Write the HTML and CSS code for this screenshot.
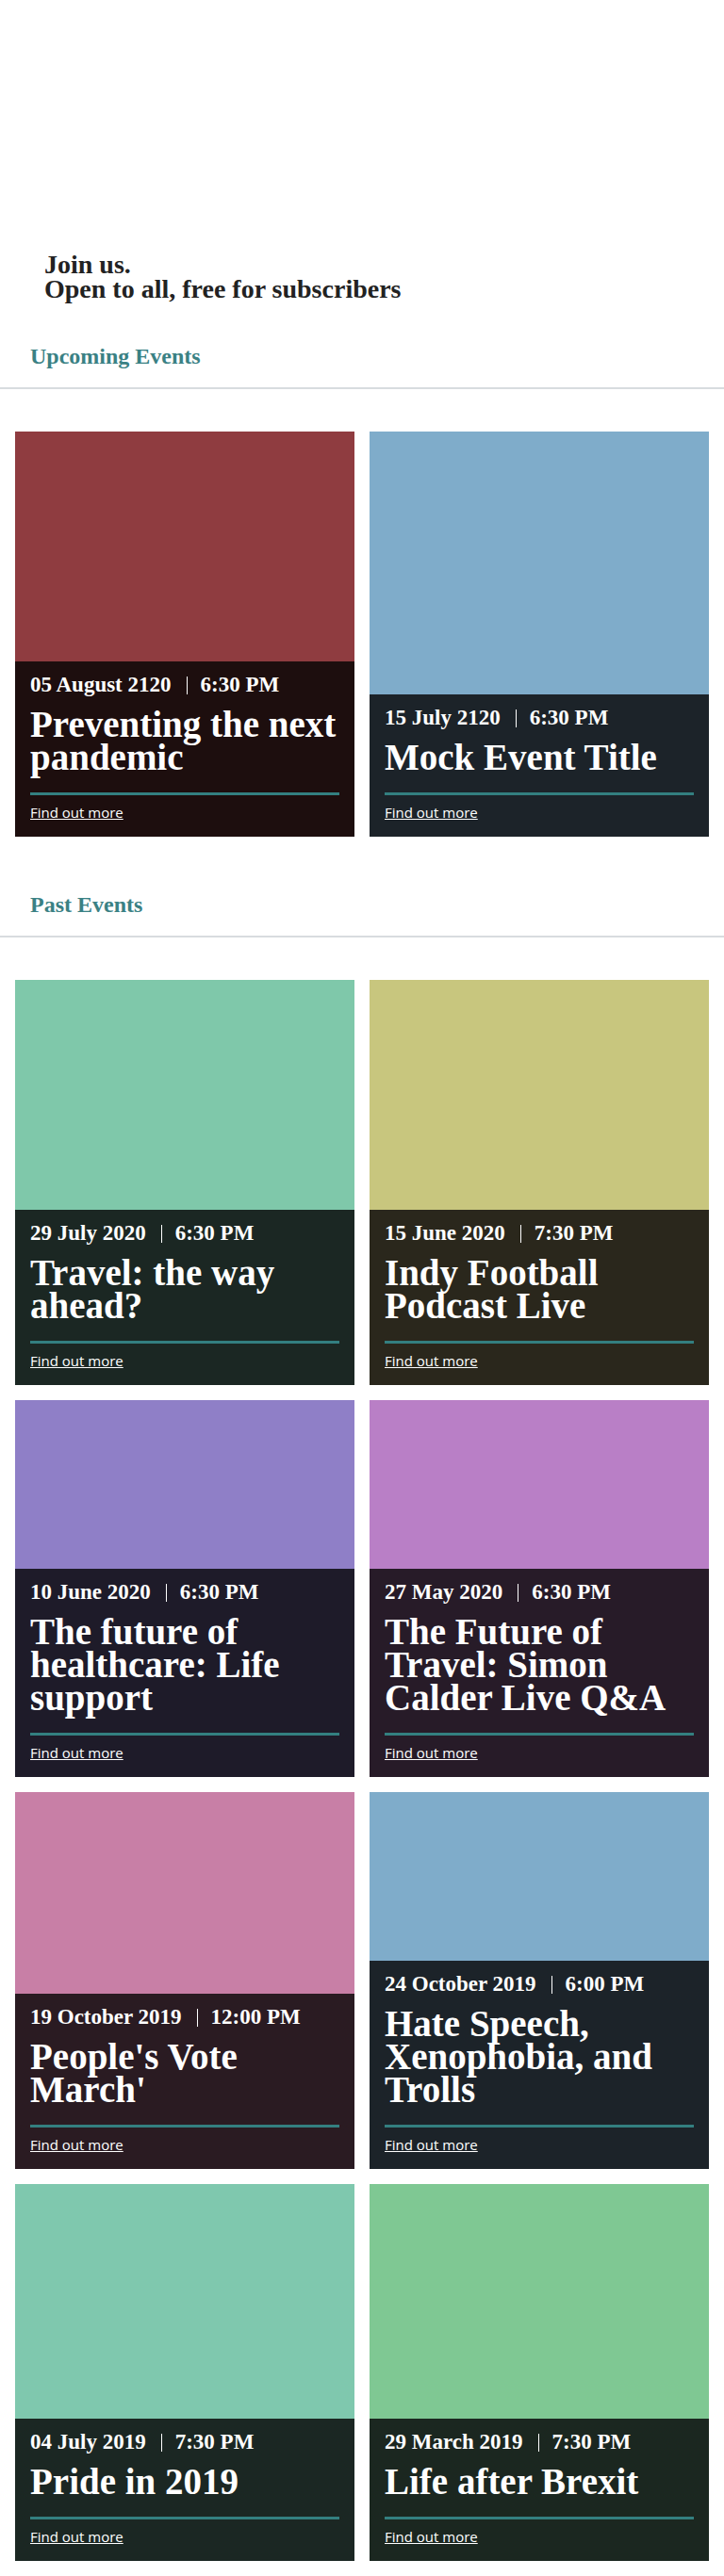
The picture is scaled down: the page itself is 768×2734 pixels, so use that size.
FILE: index.html
```html
<!DOCTYPE html>
<html lang="en">
<head>
<meta charset="utf-8">
<title>Events</title>
<link rel="stylesheet" href="styles.css">
</head>
<body>
<main class="page">
  <header class="intro">
    <h1 class="intro-title">Join us.<br>Open to all, free for subscribers</h1>
  </header>

  <section class="events">
    <h2 class="events-heading">Upcoming Events</h2>
    <div class="grid">
      <article class="card">
        <div class="thumb thumb--tall thumb-red"></div>
        <div class="body body-red">
          <p class="meta"><span>05 August 2120</span><span class="sep"></span><span>6:30 PM</span></p>
          <h3 class="title">Preventing the next pandemic</h3>
          <hr class="rule">
          <a class="more" href="#">Find out more</a>
        </div>
      </article>
      <article class="card">
        <div class="thumb thumb-blue"></div>
        <div class="body body-blue">
          <p class="meta"><span>15 July 2120</span><span class="sep"></span><span>6:30 PM</span></p>
          <h3 class="title">Mock Event Title</h3>
          <hr class="rule">
          <a class="more" href="#">Find out more</a>
        </div>
      </article>
    </div>
  </section>

  <section class="events events--past">
    <h2 class="events-heading">Past Events</h2>
    <div class="grid">
      <article class="card">
        <div class="thumb thumb--tall thumb-mint"></div>
        <div class="body body-mint">
          <p class="meta"><span>29 July 2020</span><span class="sep"></span><span>6:30 PM</span></p>
          <h3 class="title">Travel: the way ahead?</h3>
          <hr class="rule">
          <a class="more" href="#">Find out more</a>
        </div>
      </article>
      <article class="card">
        <div class="thumb thumb--tall thumb-olive"></div>
        <div class="body body-olive">
          <p class="meta"><span>15 June 2020</span><span class="sep"></span><span>7:30 PM</span></p>
          <h3 class="title">Indy Football Podcast Live</h3>
          <hr class="rule">
          <a class="more" href="#">Find out more</a>
        </div>
      </article>
      <article class="card">
        <div class="thumb thumb-violet"></div>
        <div class="body body-violet">
          <p class="meta"><span>10 June 2020</span><span class="sep"></span><span>6:30 PM</span></p>
          <h3 class="title">The future of healthcare: Life support</h3>
          <hr class="rule">
          <a class="more" href="#">Find out more</a>
        </div>
      </article>
      <article class="card">
        <div class="thumb thumb-orchid"></div>
        <div class="body body-orchid">
          <p class="meta"><span>27 May 2020</span><span class="sep"></span><span>6:30 PM</span></p>
          <h3 class="title">The Future of Travel: Simon Calder Live Q&amp;A</h3>
          <hr class="rule">
          <a class="more" href="#">Find out more</a>
        </div>
      </article>
      <article class="card">
        <div class="thumb thumb-pink"></div>
        <div class="body body-pink">
          <p class="meta"><span>19 October 2019</span><span class="sep"></span><span>12:00 PM</span></p>
          <h3 class="title">People's Vote March'</h3>
          <hr class="rule">
          <a class="more" href="#">Find out more</a>
        </div>
      </article>
      <article class="card">
        <div class="thumb thumb-blue"></div>
        <div class="body body-blue">
          <p class="meta"><span>24 October 2019</span><span class="sep"></span><span>6:00 PM</span></p>
          <h3 class="title">Hate Speech, Xenophobia, and Trolls</h3>
          <hr class="rule">
          <a class="more" href="#">Find out more</a>
        </div>
      </article>
      <article class="card">
        <div class="thumb thumb-sea"></div>
        <div class="body body-sea">
          <p class="meta"><span>04 July 2019</span><span class="sep"></span><span>7:30 PM</span></p>
          <h3 class="title">Pride in 2019</h3>
          <hr class="rule">
          <a class="more" href="#">Find out more</a>
        </div>
      </article>
      <article class="card">
        <div class="thumb thumb-green"></div>
        <div class="body body-green">
          <p class="meta"><span>29 March 2019</span><span class="sep"></span><span>7:30 PM</span></p>
          <h3 class="title">Life after Brexit</h3>
          <hr class="rule">
          <a class="more" href="#">Find out more</a>
        </div>
      </article>
    </div>
  </section>
</main>
</body>
</html>
```

FILE: styles.css
```css
* { box-sizing: border-box; }

html, body {
  margin: 0;
  padding: 0;
  background: #ffffff;
}

body {
  font-family: "Liberation Serif", "Times New Roman", serif;
  color: #222222;
}

.page {
  width: 768px;
}

.intro {
  padding: 268px 48px 0 47px;
}

.intro-title {
  margin: 0;
  font-size: 28px;
  line-height: 26px;
  font-weight: 700;
  color: #222222;
}

.events {
  padding-top: 44px;
}

.events--past {
  padding-top: 58px;
}

.events-heading {
  margin: 0;
  padding: 0 32px 19px;
  font-size: 24px;
  line-height: 28px;
  font-weight: 700;
  color: #3a8184;
  border-bottom: 2px solid #d8dcdf;
}

.grid {
  display: grid;
  grid-template-columns: 1fr 1fr;
  gap: 16px;
  padding: 45px 16px 0;
}

.card {
  display: flex;
  flex-direction: column;
  min-height: 400px;
}

.thumb {
  flex: 1 0 auto;
}

.thumb--tall {
  min-height: 244px;
}

.body {
  padding: 13px 16px 15px;
  color: #ffffff;
}

.meta {
  display: flex;
  align-items: center;
  margin: 0;
  font-size: 23px;
  line-height: 24px;
  font-weight: 700;
}

.sep {
  width: 1px;
  height: 19px;
  background: #ffffff;
  margin: 0 14px 0 16px;
}

.title {
  margin: 12px 0 0;
  font-size: 39px;
  line-height: 35px;
  font-weight: 700;
  color: #ffffff;
}

.rule {
  margin: 20px 0 0;
  border: 0;
  height: 3px;
  background: #337f80;
}

.more {
  display: inline-block;
  margin-top: 8px;
  font-family: "Open Sans", "Noto Sans", sans-serif;
  font-size: 15px;
  line-height: 21px;
  color: #ffffff;
  text-decoration: underline;
}

.thumb-red { background: #8f3c40; }
.body-red { background: #1d0e0e; }

.thumb-blue { background: #7facca; }
.body-blue { background: #1c2329; }

.thumb-mint { background: #7fc8aa; }
.body-mint { background: #1b2723; }

.thumb-olive { background: #c8c67e; }
.body-olive { background: #2a271c; }

.thumb-violet { background: #8f7fc7; }
.body-violet { background: #1e1b29; }

.thumb-orchid { background: #b97fc6; }
.body-orchid { background: #271b28; }

.thumb-pink { background: #c87fa6; }
.body-pink { background: #2a1b22; }

.thumb-sea { background: #7fc8ae; }
.body-sea { background: #1b2723; }

.thumb-green { background: #7fc893; }
.body-green { background: #1b2720; }
```
